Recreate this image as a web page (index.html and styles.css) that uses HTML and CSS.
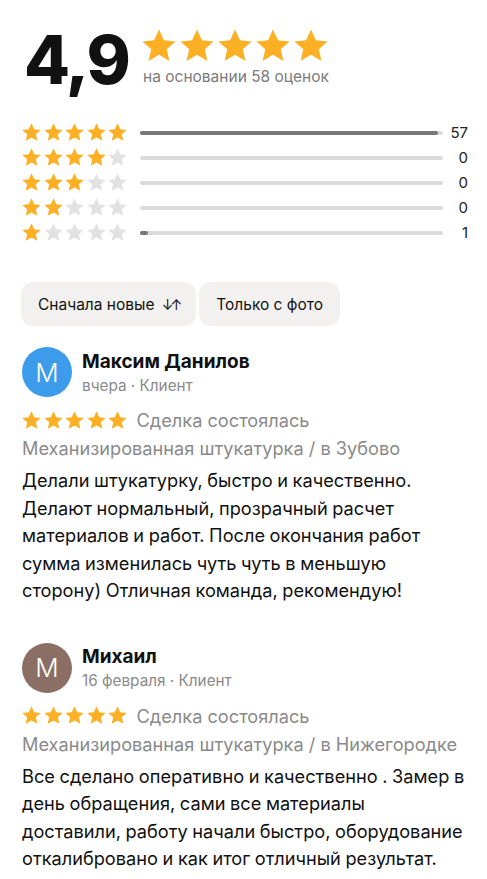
FILE: index.html
```html
<!DOCTYPE html>
<html>
<head>
    <link rel="stylesheet" href="styles.css">
</head>
<body>
    <svg width="0" height="0" class="defs">
        <defs>
            <path id="star" d="M12 1.5l3.1 6.9 7.4.7-5.6 5 1.7 7.4L12 17.6l-6.6 3.9 1.7-7.4-5.6-5 7.4-.7z"/>
        </defs>
    </svg>

    <div class="summary">
        <div class="score">4,9</div>
        <div class="score-side">
            <div class="stars big">
                <svg viewBox="0 0 24 24"><use href="#star"/></svg>
                <svg viewBox="0 0 24 24"><use href="#star"/></svg>
                <svg viewBox="0 0 24 24"><use href="#star"/></svg>
                <svg viewBox="0 0 24 24"><use href="#star"/></svg>
                <svg viewBox="0 0 24 24"><use href="#star"/></svg>
            </div>
            <div class="based">на основании 58 оценок</div>
        </div>
    </div>

    <div class="bars" id="bars"></div>

    <div class="filters">
        <button class="chip">Сначала новые <span class="sort">↓↑</span></button>
        <button class="chip">Только с фото</button>
    </div>

    <div class="review">
        <div class="author">
            <div class="avatar blue">M</div>
            <div>
                <div class="name">Максим Данилов</div>
                <div class="meta">вчера · Клиент</div>
            </div>
        </div>
        <div class="deal">
            <div class="stars small">
                <svg viewBox="0 0 24 24"><use href="#star"/></svg>
                <svg viewBox="0 0 24 24"><use href="#star"/></svg>
                <svg viewBox="0 0 24 24"><use href="#star"/></svg>
                <svg viewBox="0 0 24 24"><use href="#star"/></svg>
                <svg viewBox="0 0 24 24"><use href="#star"/></svg>
            </div>
            <span>Сделка состоялась</span>
        </div>
        <div class="service">Механизированная штукатурка / в Зубово</div>
        <p class="text">Делали штукатурку, быстро и качественно.<br>Делают нормальный, прозрачный расчет<br>материалов и работ. После окончания работ<br>сумма изменилась чуть чуть в меньшую<br>сторону) Отличная команда, рекомендую!</p>
    </div>

    <div class="review">
        <div class="author">
            <div class="avatar brown">M</div>
            <div>
                <div class="name">Михаил</div>
                <div class="meta">16 февраля · Клиент</div>
            </div>
        </div>
        <div class="deal">
            <div class="stars small">
                <svg viewBox="0 0 24 24"><use href="#star"/></svg>
                <svg viewBox="0 0 24 24"><use href="#star"/></svg>
                <svg viewBox="0 0 24 24"><use href="#star"/></svg>
                <svg viewBox="0 0 24 24"><use href="#star"/></svg>
                <svg viewBox="0 0 24 24"><use href="#star"/></svg>
            </div>
            <span>Сделка состоялась</span>
        </div>
        <div class="service">Механизированная штукатурка / в Нижегородке</div>
        <p class="text">Все сделано оперативно и качественно . Замер в<br>день обращения, сами все материалы<br>доставили, работу начали быстро, оборудование<br>откалибровано и как итог отличный результат.</p>
    </div>

    <script>
        var counts = [57, 0, 0, 0, 1];
        var total = 58;
        var html = '';
        for (var i = 0; i < 5; i++) {
            var filled = 5 - i;
            html += '<div class="bar-row"><div class="stars row">';
            for (var s = 0; s < 5; s++) {
                html += '<svg viewBox="0 0 24 24" class="' + (s < filled ? '' : 'off') + '"><use href="#star"/></svg>';
            }
            var pct = counts[i] / total * 100;
            if (counts[i] > 0 && pct < 2.5) pct = 2.5;
            html += '</div><div class="track"><div class="fill" style="width:' + pct + '%"></div></div>';
            html += '<div class="count">' + counts[i] + '</div></div>';
        }
        document.getElementById('bars').innerHTML = html;
    </script>
</body>
</html>
```

FILE: styles.css
```css
body {
    margin: 0;
    padding: 0 4px 0 22px;
    font-family: Inter, "Noto Sans", sans-serif;
    color: #111;
    background: #fff;
}
.defs {
    position: absolute;
}
.stars {
    display: flex;
}
.stars svg {
    fill: #fdb023;
    flex: none;
}
.stars svg.off {
    fill: #e2e2e2;
}
.summary {
    display: flex;
    align-items: flex-start;
    padding-top: 20px;
    height: 92px;
}
.score {
    font-size: 67px;
    font-weight: 800;
    letter-spacing: -2px;
    line-height: 80px;
    margin-left: 2px;
    width: 119px;
}
.score-side {
    padding-top: 7px;
}
.stars.big svg {
    width: 38px;
    height: 38px;
}
.stars.big {
    margin-left: -3px;
}
.based {
    font-size: 15.5px;
    color: #7b7b7b;
    margin-top: 2px;
}
.bars {
    margin-top: 8px;
}
.bar-row {
    display: flex;
    align-items: center;
    height: 25px;
}
.stars.row svg {
    width: 21px;
    height: 21px;
    margin-right: 0.5px;
}
.stars.row {
    width: 119px;
    margin-left: -1px;
}
.track {
    width: 303px;
    height: 4px;
    border-radius: 2px;
    background: #dadada;
}
.fill {
    height: 100%;
    border-radius: 2px;
    background: #777;
}
.count {
    width: 25px;
    text-align: right;
    font-size: 15px;
    color: #222;
}
.filters {
    display: flex;
    gap: 3px;
    margin-top: 37px;
    margin-left: -1px;
}
.chip {
    border: none;
    background: #f2f1ef;
    border-radius: 12px;
    height: 44px;
    padding: 0 17px;
    font-family: inherit;
    font-size: 15.5px;
    color: #111;
}
.sort {
    font-size: 14px;
    margin-left: 3px;
    letter-spacing: -3px;
}
.review {
    margin-top: 21px;
}
.review + .review {
    margin-top: 38px;
}
.author {
    display: flex;
    align-items: center;
    gap: 10px;
}
.avatar {
    width: 50px;
    height: 50px;
    border-radius: 50%;
    color: #fff;
    font-size: 26px;
    font-weight: 300;
    display: flex;
    align-items: center;
    justify-content: center;
}
.avatar.blue {
    background: #3c9bea;
}
.avatar.brown {
    background: #8c6f64;
}
.name {
    font-size: 19px;
    font-weight: 700;
}
.meta {
    font-size: 15.3px;
    color: #8a8a8a;
    margin-top: 3px;
}
.deal {
    display: flex;
    align-items: center;
    gap: 8px;
    margin-top: 12px;
    font-size: 18.2px;
    color: #8a8a8a;
}
.stars.small svg {
    width: 21px;
    height: 21px;
    margin-right: 0.5px;
}
.stars.small {
    margin-left: -1px;
}
.service {
    font-size: 18.2px;
    color: #8a8a8a;
    margin-top: 6px;
}
.text {
    margin: 8px 0 0;
    font-size: 18.2px;
    line-height: 27.5px;
    word-spacing: -0.5px;
    white-space: nowrap;
}
```
